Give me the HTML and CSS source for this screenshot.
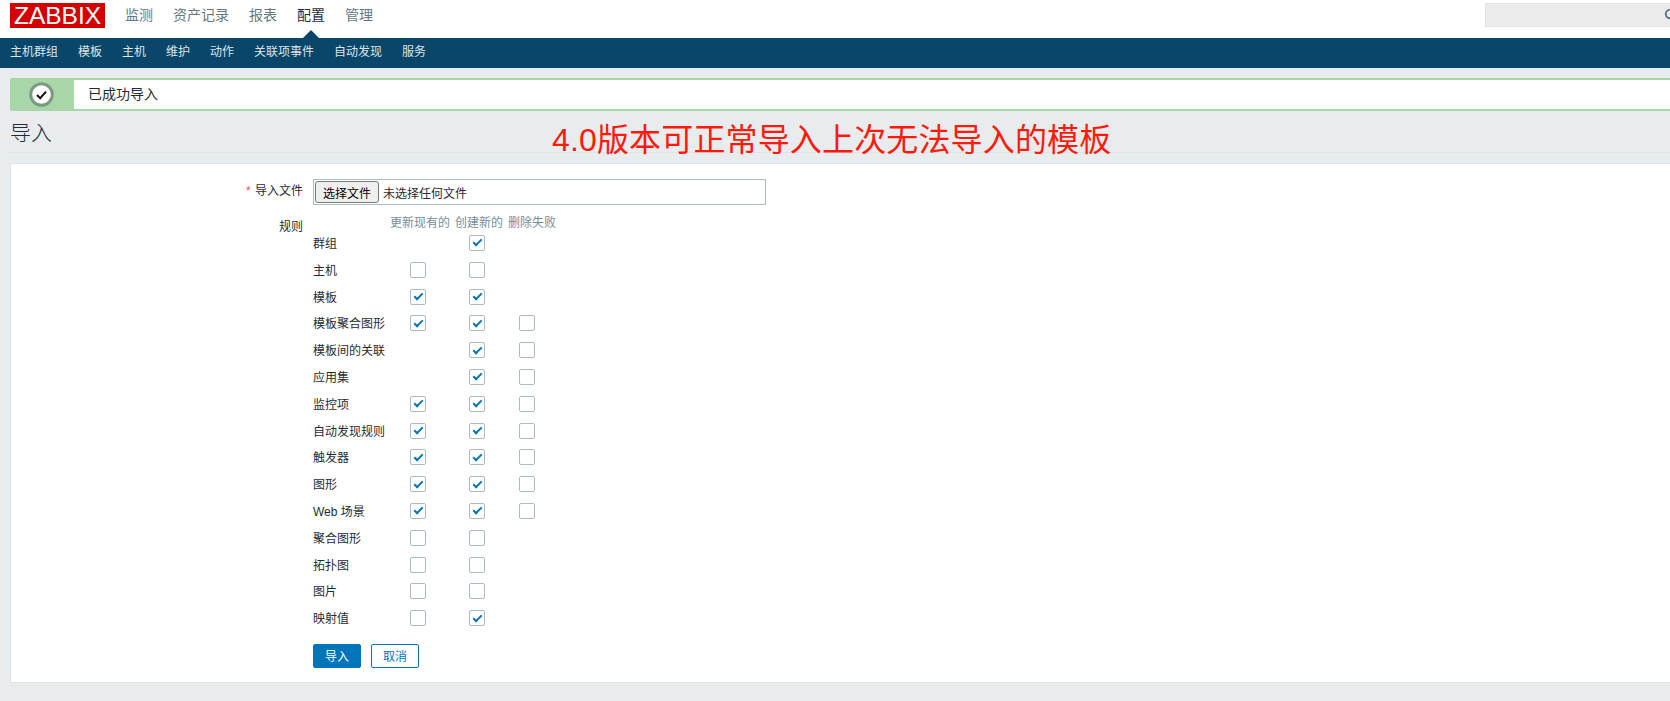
FILE: index.html
```html
<!DOCTYPE html>
<html>
  <head>
    <meta charset="utf-8">
    <title>配置模板</title>
    <link rel="stylesheet" href="styles.css">
  </head>
  <body>
    <div class="topbar">
      <div class="logo">ZABBIX</div>
      <div class="mainnav">
        <a>监测</a>
        <a>资产记录</a>
        <a>报表</a>
        <a class="active">配置</a>
        <a>管理</a>
      </div>
      <div class="search">
        <svg class="search-icon" width="14" height="14" viewBox="0 0 14 14"><circle cx="6" cy="6" r="4.2" fill="none" stroke="#5b7a8c" stroke-width="2"/><path d="M9 9l4 4" stroke="#5b7a8c" stroke-width="2"/></svg>
      </div>
    </div>
    <div class="subnav">
      <a>主机群组</a>
      <a>模板</a>
      <a>主机</a>
      <a>维护</a>
      <a>动作</a>
      <a>关联项事件</a>
      <a>自动发现</a>
      <a>服务</a>
    </div>
    <div class="content">
      <div class="msg">
        <div class="msg-icon">
          <svg width="25" height="25" viewBox="0 0 25 25"><circle cx="12.5" cy="12.5" r="10.8" fill="#fff" stroke="#7c9a80" stroke-width="3"/><path d="M8 13l3.2 3.2L17 9.6" fill="none" stroke="#111" stroke-width="2"/></svg>
        </div>
        <div class="msg-text">已成功导入</div>
      </div>
      <div class="title-row">
        <h1>导入</h1>
      </div>
      <div class="panel">
        <div class="form-row file-row">
          <div class="label"><span class="star">*</span> 导入文件</div>
          <div class="file-box">
            <button class="file-btn">选择文件</button>
            <span>未选择任何文件</span>
          </div>
        </div>
        <div class="form-row rules-row">
          <div class="label">规则</div>
          <div class="rules">
            <div></div>
            <div class="head">更新现有的</div>
            <div class="head">创建新的</div>
            <div class="head">删除失败</div>

            <div>群组</div>
            <div></div>
            <div class="c2"><input type="checkbox" checked></div>
            <div></div>

            <div>主机</div>
            <div class="c1"><input type="checkbox"></div>
            <div class="c2"><input type="checkbox"></div>
            <div></div>

            <div>模板</div>
            <div class="c1"><input type="checkbox" checked></div>
            <div class="c2"><input type="checkbox" checked></div>
            <div></div>

            <div>模板聚合图形</div>
            <div class="c1"><input type="checkbox" checked></div>
            <div class="c2"><input type="checkbox" checked></div>
            <div class="c3"><input type="checkbox"></div>

            <div>模板间的关联</div>
            <div></div>
            <div class="c2"><input type="checkbox" checked></div>
            <div class="c3"><input type="checkbox"></div>

            <div>应用集</div>
            <div></div>
            <div class="c2"><input type="checkbox" checked></div>
            <div class="c3"><input type="checkbox"></div>

            <div>监控项</div>
            <div class="c1"><input type="checkbox" checked></div>
            <div class="c2"><input type="checkbox" checked></div>
            <div class="c3"><input type="checkbox"></div>

            <div>自动发现规则</div>
            <div class="c1"><input type="checkbox" checked></div>
            <div class="c2"><input type="checkbox" checked></div>
            <div class="c3"><input type="checkbox"></div>

            <div>触发器</div>
            <div class="c1"><input type="checkbox" checked></div>
            <div class="c2"><input type="checkbox" checked></div>
            <div class="c3"><input type="checkbox"></div>

            <div>图形</div>
            <div class="c1"><input type="checkbox" checked></div>
            <div class="c2"><input type="checkbox" checked></div>
            <div class="c3"><input type="checkbox"></div>

            <div>Web 场景</div>
            <div class="c1"><input type="checkbox" checked></div>
            <div class="c2"><input type="checkbox" checked></div>
            <div class="c3"><input type="checkbox"></div>

            <div>聚合图形</div>
            <div class="c1"><input type="checkbox"></div>
            <div class="c2"><input type="checkbox"></div>
            <div></div>

            <div>拓扑图</div>
            <div class="c1"><input type="checkbox"></div>
            <div class="c2"><input type="checkbox"></div>
            <div></div>

            <div>图片</div>
            <div class="c1"><input type="checkbox"></div>
            <div class="c2"><input type="checkbox"></div>
            <div></div>

            <div>映射值</div>
            <div class="c1"><input type="checkbox"></div>
            <div class="c2"><input type="checkbox" checked></div>
            <div></div>
          </div>
        </div>
        <div class="buttons">
          <button class="btn-main">导入</button>
          <button class="btn-alt">取消</button>
        </div>
      </div>
      <div class="note">4.0版本可正常导入上次无法导入的模板</div>
    </div>
  </body>
</html>
```

FILE: styles.css
```css
html, body {
  margin: 0;
  height: 701px;
  overflow: hidden;
}
body {
  background-color: #e9ecef;
  color: #1f2c33;
  font-family: "Liberation Sans", "Noto Sans CJK SC", sans-serif;
  font-size: 12px;
}
.topbar {
  background-color: #fff;
  height: 38px;
  display: flex;
  align-items: flex-start;
  padding-left: 10px;
}
.logo {
  background-color: #d40000;
  color: #fff;
  width: 95px;
  height: 25px;
  margin-top: 3px;
  font-size: 24.5px;
  line-height: 25px;
  text-align: center;
}
.mainnav {
  display: flex;
  gap: 20px;
  margin-left: 20px;
  font-size: 14px;
  line-height: 20px;
  margin-top: 5px;
  color: #66787f;
}
.mainnav a {
  position: relative;
}
.mainnav .active {
  color: #1f2c33;
}
.mainnav .active::after {
  content: "";
  position: absolute;
  left: 6px;
  top: 25px;
  border-left: 8px solid transparent;
  border-right: 8px solid transparent;
  border-bottom: 8px solid #0a466a;
}
.search {
  position: relative;
  flex-shrink: 0;
  box-sizing: border-box;
  width: 200px;
  height: 24px;
  margin-top: 3px;
  margin-left: auto;
  margin-right: -15px;
  background-color: #ebebeb;
  border: 1px solid #dfe4e7;
}
.search-icon {
  position: absolute;
  left: 178px;
  top: 4px;
}
.subnav {
  background-color: #0a466a;
  color: #dbe5ea;
  height: 30px;
  line-height: 29px;
  display: flex;
  gap: 20px;
  padding-left: 10px;
}
.content {
  position: relative;
  padding: 10px 0 0 10px;
  margin-right: -10px;
}
.msg {
  display: flex;
  box-sizing: border-box;
  height: 33px;
  border: 2px solid #a8d6a8;
  border-radius: 2px;
  background-color: #fff;
}
.msg-icon {
  width: 59px;
  background-color: #a8d6a8;
  display: flex;
  align-items: center;
  justify-content: center;
  padding-right: 3px;
}
.msg-text {
  font-size: 14px;
  line-height: 28px;
  padding-left: 14px;
}
.title-row {
  height: 41px;
  border-bottom: 1px solid #dfe4e7;
}
h1 {
  margin: 0;
  font-size: 21px;
  font-weight: 300;
  line-height: 44px;
}
.panel {
  margin-top: 10px;
  box-sizing: border-box;
  height: 520px;
  background-color: #fff;
  border: 1px solid #dfe4e7;
  padding: 15px 0 0;
}
.form-row {
  display: flex;
}
.label {
  width: 292px;
  flex-shrink: 0;
  text-align: right;
  line-height: 24px;
}
.star {
  color: #e45959;
  margin-right: 1px;
}
.file-box {
  display: flex;
  align-items: center;
  gap: 4px;
  box-sizing: border-box;
  width: 453px;
  height: 26px;
  margin-left: 10px;
  padding-left: 1px;
  border: 1px solid #acbbc2;
}
.file-btn {
  width: 64px;
  height: 22px;
  padding: 0;
  background-color: #efefef;
  border: 1px solid #767676;
  border-radius: 3px;
  color: #000;
  font: inherit;
}
.rules-row {
  margin-top: 10px;
}
.rules {
  margin-left: 10px;
  display: grid;
  grid-template-columns: 72px 60px 48px 48px;
  grid-template-rows: 15.6px repeat(15, 26.8px);
  column-gap: 5px;
  align-items: center;
  line-height: 16px;
}
.head {
  color: #768d99;
  white-space: nowrap;
}
.rules input {
  appearance: none;
  display: block;
  position: relative;
  box-sizing: border-box;
  width: 16px;
  height: 16px;
  margin: 0;
  background-color: #fff;
  border: 1px solid #acbbc2;
  border-radius: 2px;
}
.rules input:checked::after {
  content: "";
  position: absolute;
  left: 4.5px;
  top: 1.5px;
  width: 3px;
  height: 7px;
  border-right: 2.5px solid #0275b8;
  border-bottom: 2.5px solid #0275b8;
  transform: rotate(45deg);
}
.c1, .c2, .c3 {
  padding-bottom: 2px;
}
.c1 {
  padding-left: 20px;
}
.c2 {
  padding-left: 14px;
}
.c3 {
  padding-left: 11px;
}
.buttons {
  display: flex;
  gap: 10px;
  margin-top: 11px;
  margin-left: 302px;
}
.buttons button {
  box-sizing: border-box;
  width: 48px;
  height: 24px;
  padding: 0;
  border: 1px solid #0275b8;
  border-radius: 2px;
  font: inherit;
}
.btn-main {
  background-color: #0275b8;
  color: #fff;
}
.btn-alt {
  background-color: #fff;
  color: #0275b8;
}
.note {
  position: absolute;
  left: 552px;
  top: 49px;
  color: #ff1a0a;
  font-size: 32px;
  letter-spacing: 0.15px;
  line-height: 46px;
  white-space: nowrap;
}
```
